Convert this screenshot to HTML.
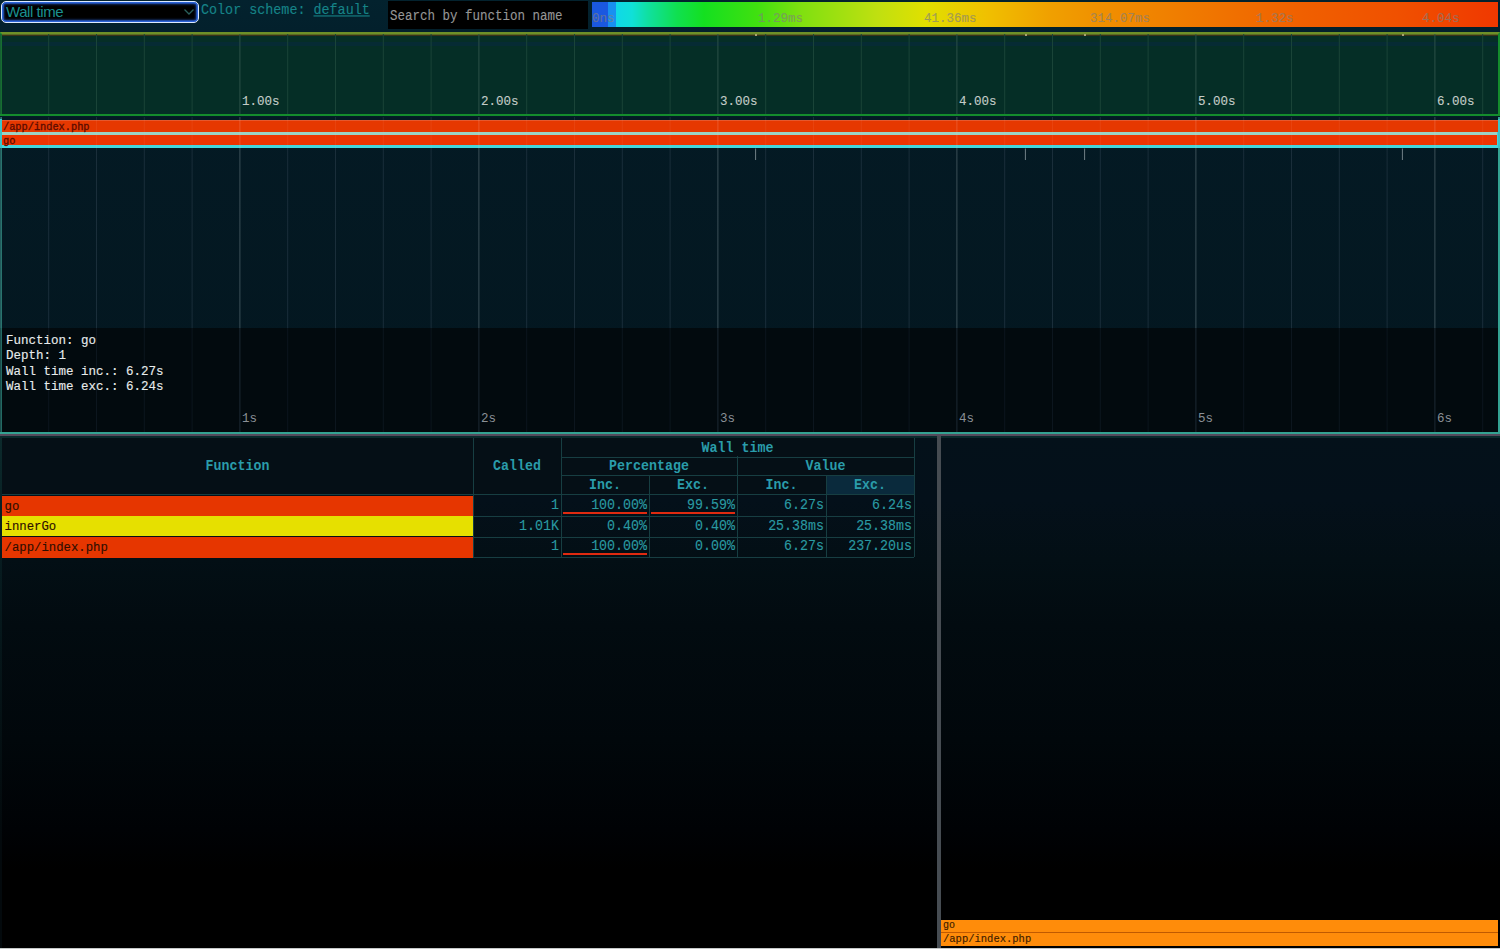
<!DOCTYPE html>
<html><head><meta charset="utf-8"><title>SPX</title><style>
*{box-sizing:border-box}
html,body{margin:0;padding:0}
body{width:1500px;height:949px;overflow:hidden;position:relative;
 background:linear-gradient(to bottom,#03222e 0px,#03202c 32px,#04111a 436px,#04101a 500px,#030f15 560px,#020b10 625px,#01070b 740px,#000205 830px,#000 870px,#000 949px);
 font-family:"Liberation Mono",monospace;}
.a{position:absolute}
.mono{font-family:"Liberation Mono",monospace}
.sy{transform:scaleY(1.1)}
.th{-webkit-text-stroke:0.12px currentColor}
</style></head>
<body>
<div class="a" style="left:1px;top:1px;width:198px;height:22px;border-radius:5px;background:#000;border:1.5px solid #dbe9ff;box-shadow:inset 0 0 0 1.5px #2a62d8,inset 0 0 2px 2.5px rgba(42,98,216,0.55)"></div>
<div class="a" style="left:6px;top:2px;font-family:'Liberation Sans',sans-serif;font-size:15px;letter-spacing:-0.45px;line-height:20px;color:#1a9090">Wall time</div>
<svg class="a" style="left:182px;top:6px" width="14" height="12"><path d="M2.5 3.5 L7 8 L11.5 3.5" stroke="#2a605c" stroke-width="1.3" fill="none"/></svg>
<div class="a mono sy th" style="left:201px;top:2px;font-size:13.4px;line-height:18px;color:#168488;white-space:pre">Color scheme: <span style="text-decoration:underline">default</span></div>
<div class="a" style="left:388px;top:1px;width:200px;height:28px;background:#000"></div>
<div class="a mono sy th" style="left:390px;top:7.5px;font-size:12.5px;line-height:18px;color:#969696;white-space:pre">Search by function name</div>
<div class="a" style="left:592px;top:2px;width:906px;height:25px;background:linear-gradient(to right,#1a58e0 0px,#1a58e0 16px,#1890f0 16px,#1890f0 24px,#10d8e8 24px,#10e0d8 40px,#10e0a0 56px,#10e050 85px,#14e020 112px,#40e010 165px,#80e010 210px,#c0e010 286px,#e0e000 333px,#f0c000 395px,#f0a000 458px,#f09000 508px,#f07800 608px,#f06000 708px,#f05000 808px,#f03800 906px)"></div>
<div class="a mono" style="left:592px;top:11px;font-size:12.5px;line-height:16px;color:rgba(128,128,124,0.62);-webkit-text-stroke:0.2px rgba(128,128,124,0.7);white-space:pre">0ns</div>
<div class="a mono" style="left:758px;top:11px;font-size:12.5px;line-height:16px;color:rgba(128,128,124,0.62);-webkit-text-stroke:0.2px rgba(128,128,124,0.7);white-space:pre">1.29ms</div>
<div class="a mono" style="left:924px;top:11px;font-size:12.5px;line-height:16px;color:rgba(128,128,124,0.62);-webkit-text-stroke:0.2px rgba(128,128,124,0.7);white-space:pre">41.36ms</div>
<div class="a mono" style="left:1090px;top:11px;font-size:12.5px;line-height:16px;color:rgba(128,128,124,0.62);-webkit-text-stroke:0.2px rgba(128,128,124,0.7);white-space:pre">314.07ms</div>
<div class="a mono" style="left:1256px;top:11px;font-size:12.5px;line-height:16px;color:rgba(128,128,124,0.62);-webkit-text-stroke:0.2px rgba(128,128,124,0.7);white-space:pre">1.32s</div>
<div class="a mono" style="left:1422px;top:11px;font-size:12.5px;line-height:16px;color:rgba(128,128,124,0.62);-webkit-text-stroke:0.2px rgba(128,128,124,0.7);white-space:pre">4.04s</div>
<div class="a" style="left:0;top:32px;width:1500px;height:84px;background:#052e26;border:2px solid #148c2c;border-top-color:#6e9028"></div>
<div class="a" style="left:2px;top:34px;width:1496px;height:1px;background:#5a6a24"></div>
<div class="a" style="left:2px;top:35px;width:1496px;height:1px;background:#3a3018"></div>
<div class="a" style="left:2px;top:42px;width:1496px;height:4px;background:rgba(8,40,70,0.45)"></div>
<div class="a" style="left:755px;top:34px;width:2px;height:1.5px;background:#a8a070"></div>
<div class="a" style="left:1025px;top:34px;width:2px;height:1.5px;background:#a8a070"></div>
<div class="a" style="left:1084px;top:34px;width:2px;height:1.5px;background:#a8a070"></div>
<div class="a" style="left:1402px;top:34px;width:2px;height:1.5px;background:#a8a070"></div>
<svg class="a" style="left:0;top:34px" width="1500" height="80"><line x1="0.90" y1="0" x2="0.90" y2="80" stroke="#1a4438" stroke-width="1"/><line x1="48.70" y1="0" x2="48.70" y2="80" stroke="#1a4438" stroke-width="1"/><line x1="96.50" y1="0" x2="96.50" y2="80" stroke="#1a4438" stroke-width="1"/><line x1="144.30" y1="0" x2="144.30" y2="80" stroke="#1a4438" stroke-width="1"/><line x1="192.10" y1="0" x2="192.10" y2="80" stroke="#1a4438" stroke-width="1"/><line x1="239.90" y1="0" x2="239.90" y2="80" stroke="#2c5048" stroke-width="1"/><line x1="287.70" y1="0" x2="287.70" y2="80" stroke="#1a4438" stroke-width="1"/><line x1="335.50" y1="0" x2="335.50" y2="80" stroke="#1a4438" stroke-width="1"/><line x1="383.30" y1="0" x2="383.30" y2="80" stroke="#1a4438" stroke-width="1"/><line x1="431.10" y1="0" x2="431.10" y2="80" stroke="#1a4438" stroke-width="1"/><line x1="478.90" y1="0" x2="478.90" y2="80" stroke="#2c5048" stroke-width="1"/><line x1="526.70" y1="0" x2="526.70" y2="80" stroke="#1a4438" stroke-width="1"/><line x1="574.50" y1="0" x2="574.50" y2="80" stroke="#1a4438" stroke-width="1"/><line x1="622.30" y1="0" x2="622.30" y2="80" stroke="#1a4438" stroke-width="1"/><line x1="670.10" y1="0" x2="670.10" y2="80" stroke="#1a4438" stroke-width="1"/><line x1="717.90" y1="0" x2="717.90" y2="80" stroke="#2c5048" stroke-width="1"/><line x1="765.70" y1="0" x2="765.70" y2="80" stroke="#1a4438" stroke-width="1"/><line x1="813.50" y1="0" x2="813.50" y2="80" stroke="#1a4438" stroke-width="1"/><line x1="861.30" y1="0" x2="861.30" y2="80" stroke="#1a4438" stroke-width="1"/><line x1="909.10" y1="0" x2="909.10" y2="80" stroke="#1a4438" stroke-width="1"/><line x1="956.90" y1="0" x2="956.90" y2="80" stroke="#2c5048" stroke-width="1"/><line x1="1004.70" y1="0" x2="1004.70" y2="80" stroke="#1a4438" stroke-width="1"/><line x1="1052.50" y1="0" x2="1052.50" y2="80" stroke="#1a4438" stroke-width="1"/><line x1="1100.30" y1="0" x2="1100.30" y2="80" stroke="#1a4438" stroke-width="1"/><line x1="1148.10" y1="0" x2="1148.10" y2="80" stroke="#1a4438" stroke-width="1"/><line x1="1195.90" y1="0" x2="1195.90" y2="80" stroke="#2c5048" stroke-width="1"/><line x1="1243.70" y1="0" x2="1243.70" y2="80" stroke="#1a4438" stroke-width="1"/><line x1="1291.50" y1="0" x2="1291.50" y2="80" stroke="#1a4438" stroke-width="1"/><line x1="1339.30" y1="0" x2="1339.30" y2="80" stroke="#1a4438" stroke-width="1"/><line x1="1387.10" y1="0" x2="1387.10" y2="80" stroke="#1a4438" stroke-width="1"/><line x1="1434.90" y1="0" x2="1434.90" y2="80" stroke="#2c5048" stroke-width="1"/><line x1="1482.70" y1="0" x2="1482.70" y2="80" stroke="#1a4438" stroke-width="1"/></svg>
<div class="a mono th" style="left:242.0px;top:94.5px;font-size:12.5px;line-height:14px;color:#c4ccc8">1.00s</div>
<div class="a mono th" style="left:481.0px;top:94.5px;font-size:12.5px;line-height:14px;color:#c4ccc8">2.00s</div>
<div class="a mono th" style="left:720.0px;top:94.5px;font-size:12.5px;line-height:14px;color:#c4ccc8">3.00s</div>
<div class="a mono th" style="left:959.0px;top:94.5px;font-size:12.5px;line-height:14px;color:#c4ccc8">4.00s</div>
<div class="a mono th" style="left:1198.0px;top:94.5px;font-size:12.5px;line-height:14px;color:#c4ccc8">5.00s</div>
<div class="a mono th" style="left:1437.0px;top:94.5px;font-size:12.5px;line-height:14px;color:#c4ccc8">6.00s</div>
<div class="a" style="left:0;top:117px;width:1500px;height:317px;background:linear-gradient(#041a24,#03161f);border:2px solid #34a292;border-top:none"></div>
<div class="a" style="left:2px;top:328px;width:1496px;height:104px;background:#020a0e"></div>
<svg class="a" style="left:0;top:117px" width="1500" height="315"><line x1="0.90" y1="0" x2="0.90" y2="211" stroke="#1a2e3a" stroke-width="1"/><line x1="0.90" y1="211" x2="0.90" y2="315" stroke="#0c161e" stroke-width="1"/><line x1="48.70" y1="0" x2="48.70" y2="211" stroke="#1a2e3a" stroke-width="1"/><line x1="48.70" y1="211" x2="48.70" y2="315" stroke="#0c161e" stroke-width="1"/><line x1="96.50" y1="0" x2="96.50" y2="211" stroke="#1a2e3a" stroke-width="1"/><line x1="96.50" y1="211" x2="96.50" y2="315" stroke="#0c161e" stroke-width="1"/><line x1="144.30" y1="0" x2="144.30" y2="211" stroke="#1a2e3a" stroke-width="1"/><line x1="144.30" y1="211" x2="144.30" y2="315" stroke="#0c161e" stroke-width="1"/><line x1="192.10" y1="0" x2="192.10" y2="211" stroke="#1a2e3a" stroke-width="1"/><line x1="192.10" y1="211" x2="192.10" y2="315" stroke="#0c161e" stroke-width="1"/><line x1="239.90" y1="0" x2="239.90" y2="211" stroke="#3c5058" stroke-width="1"/><line x1="239.90" y1="211" x2="239.90" y2="315" stroke="#1c2a34" stroke-width="1"/><line x1="287.70" y1="0" x2="287.70" y2="211" stroke="#1a2e3a" stroke-width="1"/><line x1="287.70" y1="211" x2="287.70" y2="315" stroke="#0c161e" stroke-width="1"/><line x1="335.50" y1="0" x2="335.50" y2="211" stroke="#1a2e3a" stroke-width="1"/><line x1="335.50" y1="211" x2="335.50" y2="315" stroke="#0c161e" stroke-width="1"/><line x1="383.30" y1="0" x2="383.30" y2="211" stroke="#1a2e3a" stroke-width="1"/><line x1="383.30" y1="211" x2="383.30" y2="315" stroke="#0c161e" stroke-width="1"/><line x1="431.10" y1="0" x2="431.10" y2="211" stroke="#1a2e3a" stroke-width="1"/><line x1="431.10" y1="211" x2="431.10" y2="315" stroke="#0c161e" stroke-width="1"/><line x1="478.90" y1="0" x2="478.90" y2="211" stroke="#3c5058" stroke-width="1"/><line x1="478.90" y1="211" x2="478.90" y2="315" stroke="#1c2a34" stroke-width="1"/><line x1="526.70" y1="0" x2="526.70" y2="211" stroke="#1a2e3a" stroke-width="1"/><line x1="526.70" y1="211" x2="526.70" y2="315" stroke="#0c161e" stroke-width="1"/><line x1="574.50" y1="0" x2="574.50" y2="211" stroke="#1a2e3a" stroke-width="1"/><line x1="574.50" y1="211" x2="574.50" y2="315" stroke="#0c161e" stroke-width="1"/><line x1="622.30" y1="0" x2="622.30" y2="211" stroke="#1a2e3a" stroke-width="1"/><line x1="622.30" y1="211" x2="622.30" y2="315" stroke="#0c161e" stroke-width="1"/><line x1="670.10" y1="0" x2="670.10" y2="211" stroke="#1a2e3a" stroke-width="1"/><line x1="670.10" y1="211" x2="670.10" y2="315" stroke="#0c161e" stroke-width="1"/><line x1="717.90" y1="0" x2="717.90" y2="211" stroke="#3c5058" stroke-width="1"/><line x1="717.90" y1="211" x2="717.90" y2="315" stroke="#1c2a34" stroke-width="1"/><line x1="765.70" y1="0" x2="765.70" y2="211" stroke="#1a2e3a" stroke-width="1"/><line x1="765.70" y1="211" x2="765.70" y2="315" stroke="#0c161e" stroke-width="1"/><line x1="813.50" y1="0" x2="813.50" y2="211" stroke="#1a2e3a" stroke-width="1"/><line x1="813.50" y1="211" x2="813.50" y2="315" stroke="#0c161e" stroke-width="1"/><line x1="861.30" y1="0" x2="861.30" y2="211" stroke="#1a2e3a" stroke-width="1"/><line x1="861.30" y1="211" x2="861.30" y2="315" stroke="#0c161e" stroke-width="1"/><line x1="909.10" y1="0" x2="909.10" y2="211" stroke="#1a2e3a" stroke-width="1"/><line x1="909.10" y1="211" x2="909.10" y2="315" stroke="#0c161e" stroke-width="1"/><line x1="956.90" y1="0" x2="956.90" y2="211" stroke="#3c5058" stroke-width="1"/><line x1="956.90" y1="211" x2="956.90" y2="315" stroke="#1c2a34" stroke-width="1"/><line x1="1004.70" y1="0" x2="1004.70" y2="211" stroke="#1a2e3a" stroke-width="1"/><line x1="1004.70" y1="211" x2="1004.70" y2="315" stroke="#0c161e" stroke-width="1"/><line x1="1052.50" y1="0" x2="1052.50" y2="211" stroke="#1a2e3a" stroke-width="1"/><line x1="1052.50" y1="211" x2="1052.50" y2="315" stroke="#0c161e" stroke-width="1"/><line x1="1100.30" y1="0" x2="1100.30" y2="211" stroke="#1a2e3a" stroke-width="1"/><line x1="1100.30" y1="211" x2="1100.30" y2="315" stroke="#0c161e" stroke-width="1"/><line x1="1148.10" y1="0" x2="1148.10" y2="211" stroke="#1a2e3a" stroke-width="1"/><line x1="1148.10" y1="211" x2="1148.10" y2="315" stroke="#0c161e" stroke-width="1"/><line x1="1195.90" y1="0" x2="1195.90" y2="211" stroke="#3c5058" stroke-width="1"/><line x1="1195.90" y1="211" x2="1195.90" y2="315" stroke="#1c2a34" stroke-width="1"/><line x1="1243.70" y1="0" x2="1243.70" y2="211" stroke="#1a2e3a" stroke-width="1"/><line x1="1243.70" y1="211" x2="1243.70" y2="315" stroke="#0c161e" stroke-width="1"/><line x1="1291.50" y1="0" x2="1291.50" y2="211" stroke="#1a2e3a" stroke-width="1"/><line x1="1291.50" y1="211" x2="1291.50" y2="315" stroke="#0c161e" stroke-width="1"/><line x1="1339.30" y1="0" x2="1339.30" y2="211" stroke="#1a2e3a" stroke-width="1"/><line x1="1339.30" y1="211" x2="1339.30" y2="315" stroke="#0c161e" stroke-width="1"/><line x1="1387.10" y1="0" x2="1387.10" y2="211" stroke="#1a2e3a" stroke-width="1"/><line x1="1387.10" y1="211" x2="1387.10" y2="315" stroke="#0c161e" stroke-width="1"/><line x1="1434.90" y1="0" x2="1434.90" y2="211" stroke="#3c5058" stroke-width="1"/><line x1="1434.90" y1="211" x2="1434.90" y2="315" stroke="#1c2a34" stroke-width="1"/><line x1="1482.70" y1="0" x2="1482.70" y2="211" stroke="#1a2e3a" stroke-width="1"/><line x1="1482.70" y1="211" x2="1482.70" y2="315" stroke="#0c161e" stroke-width="1"/></svg>
<div class="a" style="left:2px;top:120px;width:1496px;height:12px;background:#e63800"></div>
<div class="a" style="left:2px;top:119.5px;width:1496px;height:1px;background:rgba(230,120,90,0.5)"></div>
<div class="a" style="left:2px;top:132px;width:1494.5px;height:3px;background:#9cd2c4"></div>
<div class="a" style="left:2px;top:135px;width:1494.5px;height:10px;background:#ee3400"></div>
<div class="a" style="left:1496.5px;top:132px;width:2px;height:16px;background:#44d6dc"></div>
<div class="a" style="left:0px;top:145px;width:1500px;height:3px;background:#44d6dc"></div>
<div class="a" style="left:0px;top:119px;width:2px;height:29px;background:#3cc4c8"></div>
<div class="a" style="left:1498px;top:119px;width:2px;height:29px;background:#3cc4c8"></div>
<div class="a mono" style="left:3px;top:121px;font-size:10.3px;line-height:12px;color:#5a0c00;-webkit-text-stroke:0.3px #5a0c00">/app/index.php</div>
<div class="a mono" style="left:3px;top:135px;font-size:10.3px;line-height:12px;color:#5a0c00;-webkit-text-stroke:0.3px #5a0c00">go</div>
<svg class="a" style="left:0;top:119.5px" width="1500" height="41"><line x1="48.70" y1="0" x2="48.70" y2="28" stroke="rgba(255,200,180,0.08)" stroke-width="1"/><line x1="96.50" y1="0" x2="96.50" y2="28" stroke="rgba(255,200,180,0.08)" stroke-width="1"/><line x1="144.30" y1="0" x2="144.30" y2="28" stroke="rgba(255,200,180,0.08)" stroke-width="1"/><line x1="192.10" y1="0" x2="192.10" y2="28" stroke="rgba(255,200,180,0.08)" stroke-width="1"/><line x1="239.90" y1="0" x2="239.90" y2="28" stroke="rgba(255,200,180,0.22)" stroke-width="1"/><line x1="287.70" y1="0" x2="287.70" y2="28" stroke="rgba(255,200,180,0.08)" stroke-width="1"/><line x1="335.50" y1="0" x2="335.50" y2="28" stroke="rgba(255,200,180,0.08)" stroke-width="1"/><line x1="383.30" y1="0" x2="383.30" y2="28" stroke="rgba(255,200,180,0.08)" stroke-width="1"/><line x1="431.10" y1="0" x2="431.10" y2="28" stroke="rgba(255,200,180,0.08)" stroke-width="1"/><line x1="478.90" y1="0" x2="478.90" y2="28" stroke="rgba(255,200,180,0.22)" stroke-width="1"/><line x1="526.70" y1="0" x2="526.70" y2="28" stroke="rgba(255,200,180,0.08)" stroke-width="1"/><line x1="574.50" y1="0" x2="574.50" y2="28" stroke="rgba(255,200,180,0.08)" stroke-width="1"/><line x1="622.30" y1="0" x2="622.30" y2="28" stroke="rgba(255,200,180,0.08)" stroke-width="1"/><line x1="670.10" y1="0" x2="670.10" y2="28" stroke="rgba(255,200,180,0.08)" stroke-width="1"/><line x1="717.90" y1="0" x2="717.90" y2="28" stroke="rgba(255,200,180,0.22)" stroke-width="1"/><line x1="765.70" y1="0" x2="765.70" y2="28" stroke="rgba(255,200,180,0.08)" stroke-width="1"/><line x1="813.50" y1="0" x2="813.50" y2="28" stroke="rgba(255,200,180,0.08)" stroke-width="1"/><line x1="861.30" y1="0" x2="861.30" y2="28" stroke="rgba(255,200,180,0.08)" stroke-width="1"/><line x1="909.10" y1="0" x2="909.10" y2="28" stroke="rgba(255,200,180,0.08)" stroke-width="1"/><line x1="956.90" y1="0" x2="956.90" y2="28" stroke="rgba(255,200,180,0.22)" stroke-width="1"/><line x1="1004.70" y1="0" x2="1004.70" y2="28" stroke="rgba(255,200,180,0.08)" stroke-width="1"/><line x1="1052.50" y1="0" x2="1052.50" y2="28" stroke="rgba(255,200,180,0.08)" stroke-width="1"/><line x1="1100.30" y1="0" x2="1100.30" y2="28" stroke="rgba(255,200,180,0.08)" stroke-width="1"/><line x1="1148.10" y1="0" x2="1148.10" y2="28" stroke="rgba(255,200,180,0.08)" stroke-width="1"/><line x1="1195.90" y1="0" x2="1195.90" y2="28" stroke="rgba(255,200,180,0.22)" stroke-width="1"/><line x1="1243.70" y1="0" x2="1243.70" y2="28" stroke="rgba(255,200,180,0.08)" stroke-width="1"/><line x1="1291.50" y1="0" x2="1291.50" y2="28" stroke="rgba(255,200,180,0.08)" stroke-width="1"/><line x1="1339.30" y1="0" x2="1339.30" y2="28" stroke="rgba(255,200,180,0.08)" stroke-width="1"/><line x1="1387.10" y1="0" x2="1387.10" y2="28" stroke="rgba(255,200,180,0.08)" stroke-width="1"/><line x1="1434.90" y1="0" x2="1434.90" y2="28" stroke="rgba(255,200,180,0.22)" stroke-width="1"/><line x1="1482.70" y1="0" x2="1482.70" y2="28" stroke="rgba(255,200,180,0.08)" stroke-width="1"/><line x1="755.6" y1="28.5" x2="755.6" y2="40" stroke="#7e8c92" stroke-width="0.9"/><line x1="1025.4" y1="28.5" x2="1025.4" y2="40" stroke="#7e8c92" stroke-width="0.9"/><line x1="1084.6" y1="28.5" x2="1084.6" y2="40" stroke="#7e8c92" stroke-width="0.9"/><line x1="1402.4" y1="28.5" x2="1402.4" y2="40" stroke="#7e8c92" stroke-width="0.9"/></svg>
<div class="a mono th" style="left:6px;top:332.5px;font-size:12.5px;line-height:16px;color:#e8ecec;white-space:pre">Function: go</div>
<div class="a mono th" style="left:6px;top:348.1px;font-size:12.5px;line-height:16px;color:#e8ecec;white-space:pre">Depth: 1</div>
<div class="a mono th" style="left:6px;top:363.7px;font-size:12.5px;line-height:16px;color:#e8ecec;white-space:pre">Wall time inc.: 6.27s</div>
<div class="a mono th" style="left:6px;top:379.3px;font-size:12.5px;line-height:16px;color:#e8ecec;white-space:pre">Wall time exc.: 6.24s</div>
<div class="a mono" style="left:242.0px;top:410.5px;font-size:12.5px;line-height:16px;color:#8a9096">1s</div>
<div class="a mono" style="left:481.0px;top:410.5px;font-size:12.5px;line-height:16px;color:#8a9096">2s</div>
<div class="a mono" style="left:720.0px;top:410.5px;font-size:12.5px;line-height:16px;color:#8a9096">3s</div>
<div class="a mono" style="left:959.0px;top:410.5px;font-size:12.5px;line-height:16px;color:#8a9096">4s</div>
<div class="a mono" style="left:1198.0px;top:410.5px;font-size:12.5px;line-height:16px;color:#8a9096">5s</div>
<div class="a mono" style="left:1437.0px;top:410.5px;font-size:12.5px;line-height:16px;color:#8a9096">6s</div>
<div class="a" style="left:0;top:434px;width:1500px;height:1.5px;background:#564a5c"></div>
<div class="a" style="left:0;top:435.5px;width:1500px;height:2px;background:#0a2a2c"></div>
<div class="a" style="left:0;top:436px;width:2px;height:513px;background:linear-gradient(#0c2a2c,#071c20 120px,#03090c 400px)"></div>
<div class="a" style="left:2px;top:438px;width:912.5px;height:56px;background:#050f16"></div>
<div class="a" style="left:826px;top:475px;width:88px;height:19px;background:#0a2a3c"></div>
<div class="a" style="left:561px;top:456.6px;width:353px;height:1px;background:#173e42"></div>
<div class="a" style="left:561px;top:475px;width:353px;height:1px;background:#173e42"></div>
<div class="a" style="left:2px;top:494px;width:912px;height:1px;background:#173e42"></div>
<div class="a" style="left:2px;top:516px;width:912px;height:1px;background:#173e42"></div>
<div class="a" style="left:2px;top:536.7px;width:912px;height:1px;background:#173e42"></div>
<div class="a" style="left:2px;top:557px;width:912px;height:1px;background:#173e42"></div>
<div class="a" style="left:473px;top:438px;width:1px;height:119px;background:#173e42"></div>
<div class="a" style="left:561px;top:438px;width:1px;height:119px;background:#173e42"></div>
<div class="a" style="left:649px;top:475px;width:1px;height:82px;background:#173e42"></div>
<div class="a" style="left:737px;top:456px;width:1px;height:101px;background:#173e42"></div>
<div class="a" style="left:826px;top:475px;width:1px;height:82px;background:#173e42"></div>
<div class="a" style="left:914px;top:438px;width:1px;height:119px;background:#173e42"></div>
<div class="a mono sy" style="left:2px;top:458.0px;width:471px;text-align:center;font-size:13.3px;line-height:18px;color:#2a9caa;font-weight:bold;white-space:pre">Function</div>
<div class="a mono sy" style="left:473px;top:458.0px;width:88px;text-align:center;font-size:13.3px;line-height:18px;color:#2a9caa;font-weight:bold;white-space:pre">Called</div>
<div class="a mono sy" style="left:561px;top:439.5px;width:353px;text-align:center;font-size:13.3px;line-height:18px;color:#2a9caa;font-weight:bold;white-space:pre">Wall time</div>
<div class="a mono sy" style="left:561px;top:458.0px;width:176px;text-align:center;font-size:13.3px;line-height:18px;color:#2a9caa;font-weight:bold;white-space:pre">Percentage</div>
<div class="a mono sy" style="left:737px;top:458.0px;width:177px;text-align:center;font-size:13.3px;line-height:18px;color:#2a9caa;font-weight:bold;white-space:pre">Value</div>
<div class="a mono sy" style="left:561px;top:477.0px;width:88px;text-align:center;font-size:13.3px;line-height:18px;color:#2a9caa;font-weight:bold;white-space:pre">Inc.</div>
<div class="a mono sy" style="left:649px;top:477.0px;width:88px;text-align:center;font-size:13.3px;line-height:18px;color:#2a9caa;font-weight:bold;white-space:pre">Exc.</div>
<div class="a mono sy" style="left:737px;top:477.0px;width:89px;text-align:center;font-size:13.3px;line-height:18px;color:#2a9caa;font-weight:bold;white-space:pre">Inc.</div>
<div class="a mono sy" style="left:826px;top:477.0px;width:88px;text-align:center;font-size:13.3px;line-height:18px;color:#2a9caa;font-weight:bold;white-space:pre">Exc.</div>
<div class="a" style="left:2px;top:495.5px;width:471px;height:20.0px;background:#e63600"></div>
<div class="a mono sy th" style="left:4.5px;top:497.5px;font-size:12.3px;line-height:18px;color:#2e0e00;white-space:pre">go</div>
<div class="a mono sy th" style="left:473px;top:497.0px;width:86px;text-align:right;font-size:13.3px;line-height:18px;color:#2a9aa2;white-space:pre">1</div>
<div class="a mono sy th" style="left:561px;top:497.0px;width:86px;text-align:right;font-size:13.3px;line-height:18px;color:#2a9aa2;white-space:pre">100.00%</div>
<div class="a mono sy th" style="left:649px;top:497.0px;width:86px;text-align:right;font-size:13.3px;line-height:18px;color:#2a9aa2;white-space:pre">99.59%</div>
<div class="a mono sy th" style="left:737px;top:497.0px;width:87px;text-align:right;font-size:13.3px;line-height:18px;color:#2a9aa2;white-space:pre">6.27s</div>
<div class="a mono sy th" style="left:826px;top:497.0px;width:86px;text-align:right;font-size:13.3px;line-height:18px;color:#2a9aa2;white-space:pre">6.24s</div>
<div class="a" style="left:563px;top:511.5px;width:84.0px;height:2.5px;background:#e02a10"></div>
<div class="a" style="left:651px;top:511.5px;width:83.7px;height:2.5px;background:#e02a10"></div>
<div class="a" style="left:2px;top:516px;width:471px;height:20.200000000000045px;background:#e6e000"></div>
<div class="a mono sy th" style="left:4.5px;top:518px;font-size:12.3px;line-height:18px;color:#2e0e00;white-space:pre">innerGo</div>
<div class="a mono sy th" style="left:473px;top:517.5px;width:86px;text-align:right;font-size:13.3px;line-height:18px;color:#2a9aa2;white-space:pre">1.01K</div>
<div class="a mono sy th" style="left:561px;top:517.5px;width:86px;text-align:right;font-size:13.3px;line-height:18px;color:#2a9aa2;white-space:pre">0.40%</div>
<div class="a mono sy th" style="left:649px;top:517.5px;width:86px;text-align:right;font-size:13.3px;line-height:18px;color:#2a9aa2;white-space:pre">0.40%</div>
<div class="a mono sy th" style="left:737px;top:517.5px;width:87px;text-align:right;font-size:13.3px;line-height:18px;color:#2a9aa2;white-space:pre">25.38ms</div>
<div class="a mono sy th" style="left:826px;top:517.5px;width:86px;text-align:right;font-size:13.3px;line-height:18px;color:#2a9aa2;white-space:pre">25.38ms</div>
<div class="a" style="left:2px;top:536.7px;width:471px;height:21.0px;background:#e63600"></div>
<div class="a mono sy th" style="left:4.5px;top:538.7px;font-size:12.3px;line-height:18px;color:#2e0e00;white-space:pre">/app/index.php</div>
<div class="a mono sy th" style="left:473px;top:538.2px;width:86px;text-align:right;font-size:13.3px;line-height:18px;color:#2a9aa2;white-space:pre">1</div>
<div class="a mono sy th" style="left:561px;top:538.2px;width:86px;text-align:right;font-size:13.3px;line-height:18px;color:#2a9aa2;white-space:pre">100.00%</div>
<div class="a mono sy th" style="left:649px;top:538.2px;width:86px;text-align:right;font-size:13.3px;line-height:18px;color:#2a9aa2;white-space:pre">0.00%</div>
<div class="a mono sy th" style="left:737px;top:538.2px;width:87px;text-align:right;font-size:13.3px;line-height:18px;color:#2a9aa2;white-space:pre">6.27s</div>
<div class="a mono sy th" style="left:826px;top:538.2px;width:86px;text-align:right;font-size:13.3px;line-height:18px;color:#2a9aa2;white-space:pre">237.20us</div>
<div class="a" style="left:563px;top:552.7px;width:84.0px;height:2.5px;background:#e02a10"></div>
<div class="a" style="left:937px;top:436px;width:3.5px;height:512px;background:#464c52"></div>
<div class="a" style="left:941px;top:920px;width:557px;height:12px;background:#ff8c0a"></div>
<div class="a" style="left:941px;top:932px;width:557px;height:1px;background:#c05a00"></div>
<div class="a" style="left:941px;top:933px;width:557px;height:13px;background:#ff8c0a"></div>
<div class="a mono" style="left:943px;top:920px;font-size:10px;line-height:12px;color:#3e1c00;-webkit-text-stroke:0.15px #3e1c00">go</div>
<div class="a mono" style="left:943px;top:933px;font-size:10.5px;line-height:13px;color:#3e1c00;-webkit-text-stroke:0.15px #3e1c00">/app/index.php</div>
<div class="a" style="left:0;top:948px;width:1500px;height:1px;background:#c4c8c8"></div>
</body></html>
